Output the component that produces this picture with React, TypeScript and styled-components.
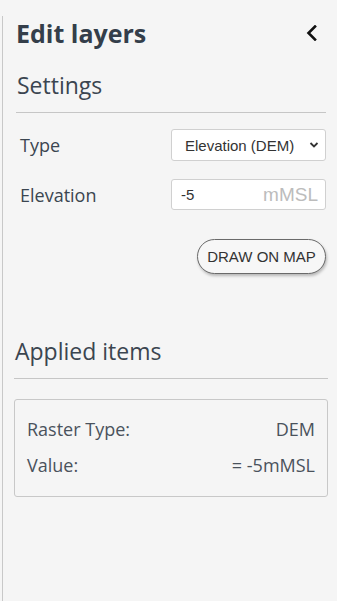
import React from 'react'
import styled, { createGlobalStyle } from 'styled-components'

const GlobalStyle = createGlobalStyle`
    html, body {
        margin: 0;
        padding: 0;
        background: #f5f5f5;
    }
    * {
        box-sizing: border-box;
    }
`

const Panel = styled.div`
    margin-left: 2px;
    min-height: 601px;
    border-left: 1px solid #c8c8c8;
    background: #f5f5f5;
    font-family: 'Open Sans', 'Noto Sans', sans-serif;
    color: #3b4550;
    padding: 0 9px 0 11px;
`

const Header = styled.div`
    display: flex;
    align-items: center;
    justify-content: space-between;
    height: 34px;
    margin-top: 16px;
    padding: 0 9px 0 2px;
`

const Title = styled.h1`
    margin: 0;
    font-size: 25px;
    font-weight: 700;
    color: #343e4a;
`

const BackButton = styled.button`
    border: none;
    background: none;
    padding: 0;
    display: flex;
    cursor: pointer;
`

const Section = styled.section<{ $top: number; $inset?: number }>`
    margin-top: ${(p) => p.$top}px;
    margin-left: ${(p) => p.$inset ?? 0}px;
    margin-right: ${(p) => p.$inset ?? 0}px;
`

const SectionTitle = styled.h2`
    margin: 0;
    padding: 0 0 12px 1px;
    font-size: 23px;
    font-weight: 400;
    color: #3b4550;
    border-bottom: 1px solid #c6c6c6;
    line-height: 30px;
`

const Form = styled.div`
    display: flex;
    flex-direction: column;
    gap: 18px;
    padding: 16px 0 0 4px;
`

const Row = styled.div`
    display: flex;
    align-items: center;
    justify-content: space-between;
`

const Label = styled.label`
    font-size: 18px;
    color: #3b4550;
`

const Select = styled.div`
    width: 155px;
    height: 32px;
    background: #fff;
    border: 1px solid #d0d0d0;
    border-radius: 3px;
    display: flex;
    align-items: center;
    justify-content: space-between;
    padding: 0 6px 0 13px;
    font-family: 'Liberation Sans', Arial, sans-serif;
    font-size: 15px;
    color: #333;
`

const Input = styled.div`
    width: 155px;
    height: 31px;
    background: #fff;
    border: 1px solid #d0d0d0;
    border-radius: 3px;
    display: flex;
    align-items: center;
    justify-content: space-between;
    padding: 0 7px 0 9px;
    font-family: 'Liberation Sans', Arial, sans-serif;
    font-size: 15px;
    color: #333;
`

const Unit = styled.span`
    font-size: 19px;
    color: #bcbcbc;
`

const Actions = styled.div`
    display: flex;
    justify-content: flex-end;
    padding-top: 29px;
`

const DrawButton = styled.button`
    height: 35px;
    width: 129px;
    padding: 0;
    border: 1px solid #6a6a6a;
    border-radius: 18px;
    background: #f7f7f7;
    box-shadow: 1px 2px 3px rgba(0, 0, 0, 0.25);
    font-family: 'Liberation Sans', Arial, sans-serif;
    font-size: 15px;
    color: #333;
    cursor: pointer;
`

const ItemsBox = styled.div`
    margin-top: 20px;
    border: 1px solid #c8c8c8;
    border-radius: 3px;
    padding: 17px 12px 19px 12px;
    display: flex;
    flex-direction: column;
    gap: 12px;
`

const ItemRow = styled.div`
    display: flex;
    justify-content: space-between;
    font-size: 18px;
    color: #4a525c;
    line-height: 24px;
`

const Chevron = () => (
    <svg width="14" height="16" viewBox="0 0 14 16" fill="none">
        <path d="M10 1.5 L3.5 8 L10 14.5" stroke="#111" strokeWidth="2.6" strokeLinecap="square" />
    </svg>
)

const SmallChevron = () => (
    <svg width="10" height="8" viewBox="0 0 10 8" fill="none">
        <path d="M1.5 2 L5 5.5 L8.5 2" stroke="#333" strokeWidth="1.8" />
    </svg>
)

const App = () => {
    return (
        <>
            <GlobalStyle />
            <Panel>
                <Header>
                    <Title>Edit layers</Title>
                    <BackButton aria-label="Collapse">
                        <Chevron />
                    </BackButton>
                </Header>
                <Section $top={20} $inset={2}>
                    <SectionTitle>Settings</SectionTitle>
                    <Form>
                        <Row>
                            <Label>Type</Label>
                            <Select>
                                <span>Elevation (DEM)</span>
                                <SmallChevron />
                            </Select>
                        </Row>
                        <Row>
                            <Label>Elevation</Label>
                            <Input>
                                <span>-5</span>
                                <Unit>mMSL</Unit>
                            </Input>
                        </Row>
                    </Form>
                    <Actions>
                        <DrawButton>DRAW ON MAP</DrawButton>
                    </Actions>
                </Section>
                <Section $top={62}>
                    <SectionTitle>Applied items</SectionTitle>
                    <ItemsBox>
                        <ItemRow>
                            <span>Raster Type:</span>
                            <span>DEM</span>
                        </ItemRow>
                        <ItemRow>
                            <span>Value:</span>
                            <span>= -5mMSL</span>
                        </ItemRow>
                    </ItemsBox>
                </Section>
            </Panel>
        </>
    )
}

export default App
